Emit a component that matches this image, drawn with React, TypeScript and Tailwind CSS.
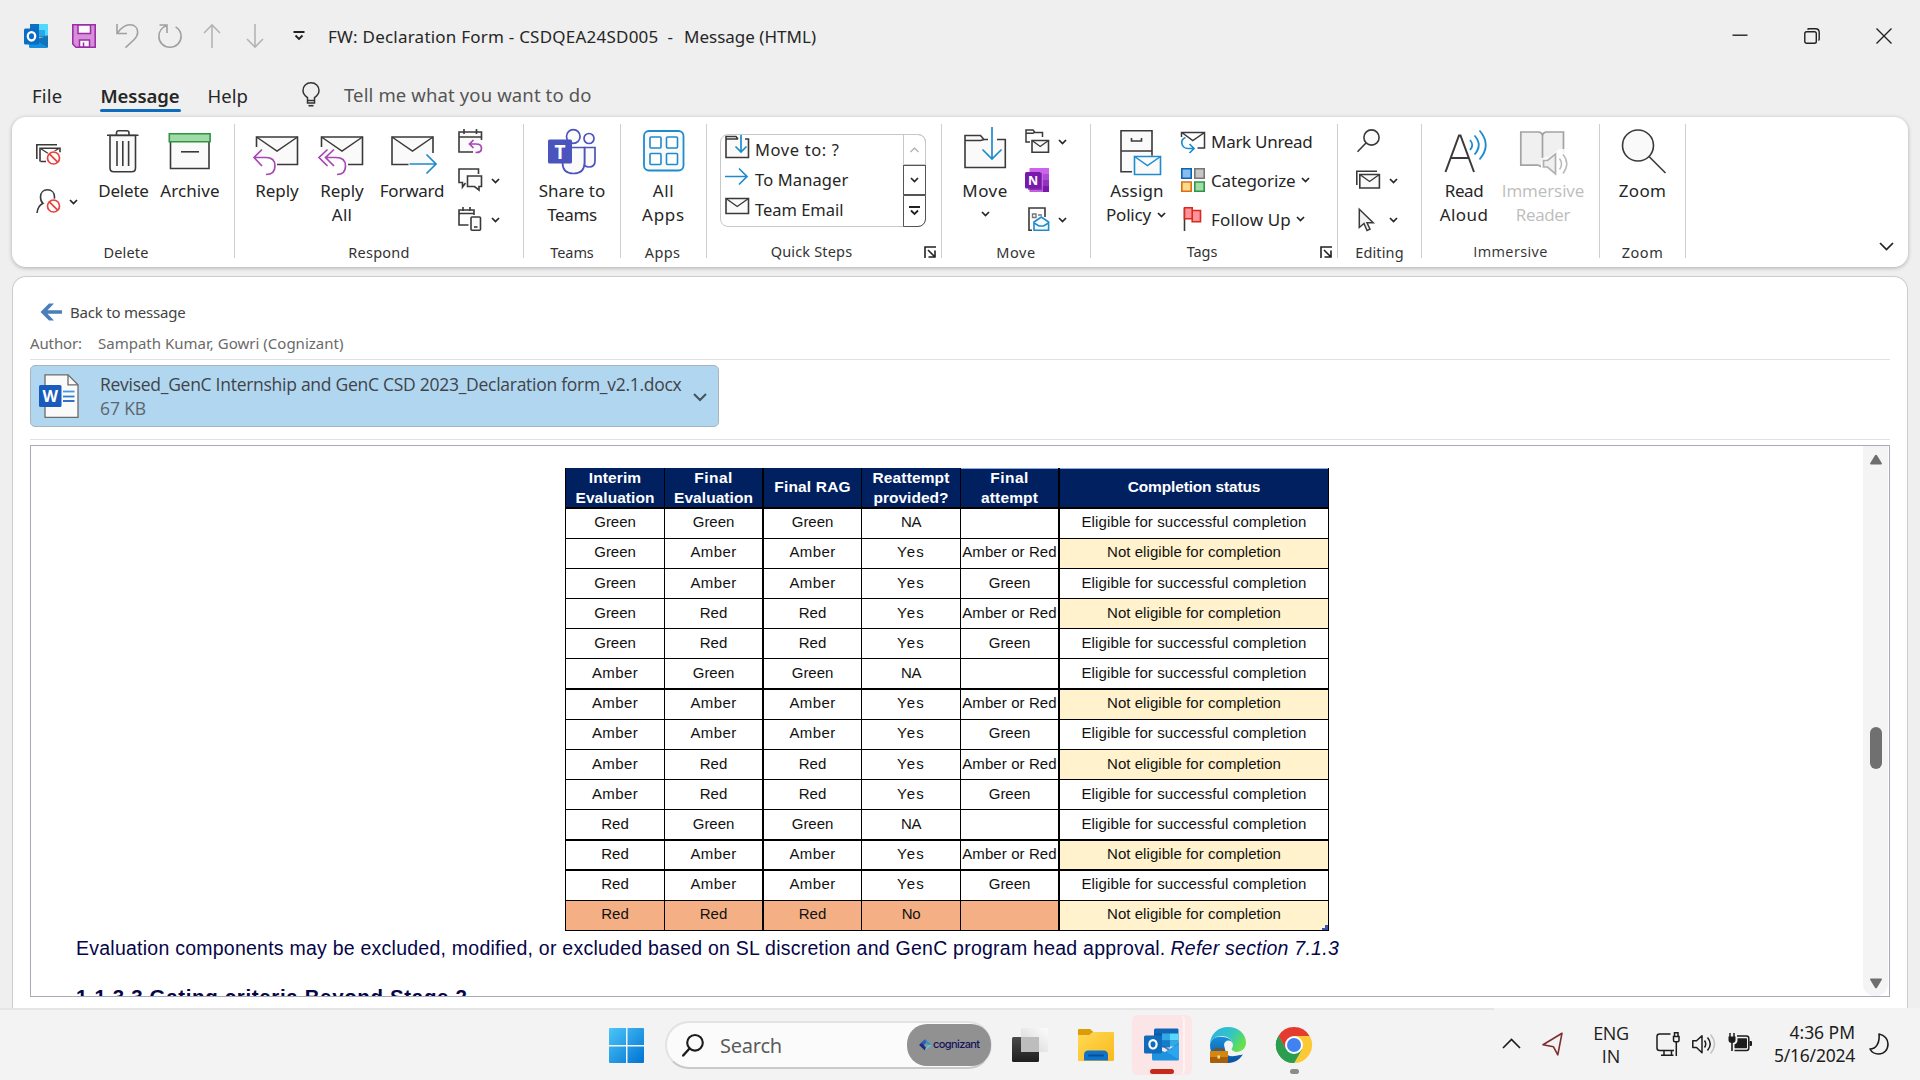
import React, { useLayoutEffect, useRef } from "react";

/** Text that is tracked so that its advance equals the given width. */
function Fit({ w, children, className = "" }: { w: number; children: string; className?: string }) {
  const ref = useRef<HTMLSpanElement>(null);
  useLayoutEffect(() => {
    const el = ref.current;
    if (!el) return;
    el.style.letterSpacing = "0px";
    const natural = el.getBoundingClientRect().width;
    el.style.letterSpacing = `${(w + 1.5 - natural) / children.length}px`;
  }, [w, children]);
  return (
    <span ref={ref} className={"inline-block whitespace-pre " + className}>
      {children}
    </span>
  );
}

type SvgProps = { w?: number; h?: number; children: React.ReactNode; className?: string };
function Svg({ w = 24, h = 24, children, className = "" }: SvgProps) {
  return (
    <svg width={w} height={h} viewBox={`0 0 ${w} ${h}`} fill="none" className={"shrink-0 overflow-visible " + className}>
      {children}
    </svg>
  );
}

const INK = "#3b3a39";
const BLUE = "#1e8bcd";
const PURPLE = "#a846b4";
const FILL = "#fafafa";

function Chevron({ className = "" }: { className?: string }) {
  return (
    <Svg w={9} h={6} className={className}>
      <path d="M1 1l3.5 3.6L8 1" stroke="#262626" strokeWidth="1.7" />
    </Svg>
  );
}

function Group({ width, label, labelW, labelClass = "", font = "", children, launcher = false }: {
  width: string; label: string; labelW: number; labelClass?: string; font?: string; children: React.ReactNode; launcher?: boolean;
}) {
  return (
    <div className={"h-[134px] shrink-0 border-r border-[#cfcfcf] " + width}>
      <div className="flex h-[118px]">{children}</div>
      <div className={"relative flex h-5 justify-center text-[14.5px] leading-5 text-[#333] " + labelClass}>
        <Fit w={labelW} className={font}>{label}</Fit>
        {launcher && (
          <Svg w={12} h={12} className="absolute top-[5px] right-[5px]">
            <path d="M1 12V1h11M4 4l6.5 6.5M11 4.5V11H4.5" stroke="#222" strokeWidth="1.6" />
          </Svg>
        )}
      </div>
    </div>
  );
}

function Big({ icon, lines, className = "", font = "", tail }: {
  icon: React.ReactNode; lines: [string, number][]; className?: string; font?: string; tail?: React.ReactNode;
}) {
  return (
    <div className={"flex shrink-0 flex-col items-center pt-[3px] text-[17px] leading-6 " + font + " " + className}>
      <div className="mb-1 h-12 w-12">{icon}</div>
      {lines.map(([t, w]) => <Fit key={t} w={w}>{t}</Fit>)}
      {tail}
    </div>
  );
}

const Envelope = ({ cut }: { cut: string }) => (
  <>
    <path d="M3.5 10h41v27.500h-41z" fill={FILL} />
    <path d={cut} stroke={INK} strokeWidth="1.6" />
    <path d="M3.5 10L24 24 44.500 10" stroke={INK} strokeWidth="1.5" />
  </>
);

const Small = ({ children, className = "" }: { children: React.ReactNode; className?: string }) => (
  <div className={"flex h-[39px] items-start " + className}>{children}</div>
);

function TitleBar() {
  return (
    <div className="flex h-[72px] items-center pr-7 pl-6">
      <Svg>
        <path d="M7 1.5q0-1.5 1.5-1.5h14Q24 0 24 1.5V13H6z" fill="#28a8ea" />
        <path d="M14 0h8.500Q24 0 24 1.500V12h-9z" fill="#50d9ff" />
        <path d="M6 0h9v5H6z" fill="#0f6fc0" />
        <path d="M6 6h9v12H6z" fill="#0364b8" />
        <path d="M15 6h6v7h-6z" fill="#28a8ea" />
        <path d="M5 22.500V17l19-5v10.500q0 1.500-1.500 1.500h-16Q5 24 5 22.500z" fill="#1490df" />
        <path d="M8 14l16 9.500V11z" fill="#123f70" opacity=".35" />
        <rect x="0" y="4.500" width="15" height="16" rx="1.500" fill="#0a6cc4" />
        <ellipse cx="7.500" cy="12.300" rx="3.700" ry="4.200" stroke="#fff" strokeWidth="2.300" />
      </Svg>
      <Svg className="ml-6">
        <path d="M.8.8h22.400v22.400H4L.8 20z" fill="#d88edb" stroke="#9a2fa6" strokeWidth="1.600" />
        <path d="M6 1h12.500v8.500H6zM7.500 23v-7h10v7z" fill="#fafafa" stroke="#9a2fa6" strokeWidth="1.500" />
        <path d="M11.500 18.500V23" stroke="#9a2fa6" strokeWidth="1.500" />
      </Svg>
      <Svg className="ml-5">
        <path d="M1 0v9.500h10M1.500 9C5 4 9 .8 14 .8c5 0 7.700 3.400 7.700 7.400 0 3-1.200 4.800-3.500 7.300L9.500 23.700" stroke="#a0a0a0" strokeWidth="1.600" />
      </Svg>
      <Svg className="ml-[18px]">
        <path d="M1.500 1H9v8M9 1.500C4 3 .9 7.500.9 12.500c0 6 4.800 10.700 11 10.700s11.200-4.700 11.200-10.700c0-4-2-7.500-5.500-9.600" stroke="#a0a0a0" strokeWidth="1.600" />
      </Svg>
      <Svg className="ml-[18px]">
        <path d="M12 24V1M4 9l8-8 8 8" stroke="#b4b4b4" strokeWidth="1.600" />
      </Svg>
      <Svg className="ml-[19px]">
        <path d="M12 0v23M4 15l8 8 8-8" stroke="#b4b4b4" strokeWidth="1.600" />
      </Svg>
      <Svg w={12} h={10} className="ml-[26px]">
        <path d="M.5 1h11M2.500 4.500L6 8l3.500-3.500" stroke="#222" strokeWidth="1.800" />
      </Svg>
      <div className="mt-0.5 ml-[23px] flex text-[17px] leading-6">
        <Fit w={329}>FW: Declaration Form - CSDQEA24SD005</Fit>
        <Fit w={6} className="ml-[9px]">-</Fit>
        <Fit w={130.500} className="ml-[9px]">Message (HTML)</Fit>
      </div>
      <div className="ml-auto flex items-center gap-14">
        <Svg w={16} h={16}><path d="M.5 7.200h15" stroke="#222" strokeWidth="1.400" /></Svg>
        <Svg w={16} h={16}>
          <rect x=".8" y="3.700" width="11.500" height="11.500" rx="1.800" stroke="#222" strokeWidth="1.400" />
          <path d="M3.500 1.500Q4 .8 5 .8h6.500q3.700 0 3.700 3.700V11q0 1-.8 1.500" stroke="#222" strokeWidth="1.400" />
        </Svg>
        <Svg w={16} h={16}><path d="M.5.5l15 15M15.500.5l-15 15" stroke="#222" strokeWidth="1.400" /></Svg>
      </div>
    </div>
  );
}

function Tabs() {
  return (
    <div className="flex h-[45px] items-start pt-2.5 pl-8 text-[18.500px] leading-7">
      <Fit w={29}>File</Fit>
      <div className="ml-[37px] flex w-[81px] flex-col items-center">
        <Fit w={77.500} className="font-semibold">Message</Fit>
        <div className="-mt-px h-[3px] w-full rounded-full bg-[#0f6cbd]" />
      </div>
      <Fit w={39} className="ml-[27px]">Help</Fit>
      <Svg w={18} h={25} className="ml-[54px]">
        <path d="M5.500 18.500v-2.800C2.500 13.500 1 11.300 1 8.500 1 4 4.300.8 9 .8S17 4 17 8.500c0 2.800-1.500 5-4.500 7.200v2.800zM5.500 18.500v2.500h7v-2.500" stroke="#333" strokeWidth="1.500" />
        <path d="M6.500 23.700h5" stroke="#333" strokeWidth="1.600" />
      </Svg>
      <Fit w={246} className="-mt-px ml-6 text-[#555]">Tell me what you want to do</Fit>
    </div>
  );
}

const Prohibit = ({ y }: { y: number }) => (
  <>
    <circle cx="17.500" cy={y} r="7.500" fill="#fff" />
    <circle cx="17.500" cy={y} r="6" stroke="#e8403a" strokeWidth="1.700" fill="#fff" />
    <path d={`M13.300 ${y - 4.200}l8.400 8.400`} stroke="#e8403a" strokeWidth="1.700" />
  </>
);

function DeleteGroup() {
  return (
    <Group width="w-[223px]" label="Delete" labelW={43.5} labelClass="pl-[6px]">
      <div className="ml-6 w-[57px] shrink-0 pt-[18px]">
        <div className="flex h-[47px] items-start">
          <Svg>
            <path d="M.8 17V2.800H21M4 19.500V6.200h20v4M4.500 19.500H10" stroke={INK} strokeWidth="1.600" />
            <path d="M4.500 6.500L13 12l10-5.500" stroke={INK} strokeWidth="1.300" />
            <Prohibit y={16} />
          </Svg>
        </div>
        <div className="flex items-start">
          <Svg>
            <path d="M1 24c.5-5 2.500-8 6-9.700C5 12.800 4.500 10.500 4.500 8c0-4.500 3-7.200 7-7.200s7 2.700 7 7.200c0 .8 0 1.500-.3 2.200" stroke={INK} strokeWidth="1.600" />
            <Prohibit y={17} />
          </Svg>
          <Chevron className="mt-2.5 ml-[9px]" />
        </div>
      </div>
      <Big className="w-[61px]" lines={[["Delete", 49]]} icon={
        <Svg w={48} h={48}>
          <path d="M10 8.500h25.500v32.500q0 3.800-3.800 3.800h-18q-3.700 0-3.700-3.800z" fill={FILL} stroke={INK} strokeWidth="1.600" />
          <path d="M7 8.200h31.500M16.500 8V6q0-2.200 2.200-2.200h8q2.300 0 2.300 2.200v2M17 14v25M22.800 14v25M28.600 14v25" stroke={INK} strokeWidth="1.600" />
        </Svg>} />
      <Big className="ml-1 w-16" lines={[["Archive", 58]]} icon={
        <Svg w={48} h={48}>
          <path d="M4.500 14h38.500v27.500h-38.500z" fill={FILL} stroke={INK} strokeWidth="1.600" />
          <path d="M3.300 6.800h40.800v8H3.300z" fill="#a0dba6" stroke="#2f9447" strokeWidth="1.600" />
          <path d="M15 24.800h18" stroke={INK} strokeWidth="1.600" />
        </Svg>} />
    </Group>
  );
}

function RespondGroup() {
  return (
    <Group width="w-[289px]" label="Respond" labelW={60}>
      <Big className="ml-[14px] w-14" lines={[["Reply", 42]]} icon={
        <Svg w={48} h={48}>
          <Envelope cut="M3.500 20V10h41v27.500H24" />
          <path d="M2 31h12q8 1 8 9 0 8-10 8L3 40z" fill="#fff" opacity=".9" />
          <path d="M9 22.500L1 30.500l8 8.500M1.500 30.500H13q9 0 9 8.500 0 8.500-9 8.500" stroke={PURPLE} strokeWidth="1.700" />
        </Svg>} />
      <Big className="ml-[9px] w-14" lines={[["Reply", 42], ["All", 19]]} icon={
        <Svg w={48} h={48}>
          <Envelope cut="M3.500 20V10h41v27.500H30" />
          <path d="M9 31h10q8 1 8 9 0 8-10 8L9 40z" fill="#fff" opacity=".9" />
          <path d="M9.500 22.500L1 30.500l8.500 8.500M16 22.500L7.500 30.500l8.500 8.500M8 30.500h10q9.500 0 9.500 8.500 0 8.500-8.500 8.500" stroke={PURPLE} strokeWidth="1.700" />
        </Svg>} />
      <Big className="ml-[7px] w-[70px]" lines={[["Forward", 63]]} icon={
        <Svg w={48} h={48}>
          <g transform="translate(.5 0)"><Envelope cut="M20 37.500H3.500V10h41v16" /></g>
          <path d="M22 36.500h26L38 46l-4-6H22z" fill="#fff" />
          <path d="M21.500 37h26M38.500 27.500l9.500 9.500-9.500 9.500" stroke={BLUE} strokeWidth="1.700" />
        </Svg>} />
      <div className="ml-[11px] pt-[5px]">
        <Small>
          <Svg>
            <path d="M1 3h22.500v20H1z" fill={FILL} />
            <path d="M15 23H1V3h22.500v8M1 8h22.500M6 0v5M18.500 0v5" stroke={INK} strokeWidth="1.600" />
            <path d="M15.500 11l-4 4 4 4M11.500 15H18q5.500 0 5.500 4.300t-5.500 4.200h-.5" stroke={PURPLE} strokeWidth="1.700" />
          </Svg>
        </Small>
        <Small>
          <Svg>
            <path d="M20.500 6V1H1v13.500h3.500V19l3-4" stroke={INK} strokeWidth="1.600" />
            <path d="M9.500 8h14v10.500H21V22l-4.500-3.500h-7z" fill={FILL} stroke={INK} strokeWidth="1.600" />
          </Svg>
          <Chevron className="mt-[10px] ml-[9px]" />
        </Small>
        <Small>
          <Svg>
            <path d="M10.500 18H1V3h15v5M1 6.500h15M5 0v4M12 0v4" stroke={INK} strokeWidth="1.600" />
            <rect x="13" y="10" width="9.500" height="13.300" rx="1" fill={FILL} stroke={INK} strokeWidth="1.600" />
            <path d="M16 20h3.500" stroke={INK} strokeWidth="1.600" />
          </Svg>
          <Chevron className="mt-[10px] ml-[9px]" />
        </Small>
      </div>
    </Group>
  );
}

const FolderIn = () => (
  <Svg>
    <path d="M1 1.500h10l2 2.500h10.500v18.500H1z" fill={FILL} />
    <path d="M13 4H1V1.500h10l2 2.500V4M1 2v20.500h22.500V4H20" stroke={INK} strokeWidth="1.600" />
    <path d="M16 0v17M10.500 11.500L16 17l5.500-5.500" stroke={BLUE} strokeWidth="1.700" />
  </Svg>
);

function QuickSteps() {
  return (
    <Group width="w-[235px]" label="Quick Steps" labelW={80} labelClass="pr-[25px] -top-px" launcher>
      <div className="mt-2.5 ml-[13px] flex h-[93px] w-[206px] rounded-lg border border-[#c8c8c8] text-[16.500px]">
        <div className="flex-1 pl-1 leading-[30px]">
          <div className="flex h-[30px]"><FolderIn /><Fit w={83} className="ml-1.5">Move to: ?</Fit></div>
          <div className="flex h-[30px]">
            <Svg><path d="M0 11.500h22M14 3.500l8 8-8 8" stroke={BLUE} strokeWidth="1.700" /></Svg>
            <Fit w={92} className="ml-1.5">To Manager</Fit>
          </div>
          <div className="flex h-[30px]">
            <Svg><path d="M1 3.500h22.500v15H1z" fill={FILL} stroke={INK} strokeWidth="1.600" /><path d="M1 3.500l11.200 8 11.300-8" stroke={INK} strokeWidth="1.400" /></Svg>
            <Fit w={87} className="ml-1.5">Team Email</Fit>
          </div>
        </div>
        <div className="-my-px -mr-px flex w-[23px] flex-col">
          <div className="flex h-[31px] items-center justify-center rounded-tr-lg border border-[#c8c8c8]">
            <Svg w={9} h={6}><path d="M.5 5l4-4 4 4" stroke="#b5b5b5" strokeWidth="1.500" /></Svg>
          </div>
          <div className="flex h-[30px] items-center justify-center border border-[#555]"><Chevron /></div>
          <div className="flex h-8 items-center justify-center rounded-br-lg border border-[#555]">
            <Svg w={11} h={10}><path d="M0 1h11M2 4.500L5.500 8 9 4.500" stroke="#222" strokeWidth="1.800" /></Svg>
          </div>
        </div>
      </div>
    </Group>
  );
}

function MoveGroup() {
  return (
    <Group width="w-[149px]" label="Move" labelW={38}>
      <Big className="ml-[13px] w-[60px]" lines={[["Move", 44]]} tail={<Chevron className="mt-[8px]" />} icon={
        <Svg w={48} h={48}>
          <path d="M4 8h16l3 4h21v28.500H4z" fill={FILL} />
          <path d="M4 8.500h15.500l3.500 4-3.500 1H4zM23 12.500h4M36 12.500h8.300v28H4V8" stroke={INK} strokeWidth="1.600" />
          <path d="M31 0v32M21.500 22.500l9.500 9.500 9.500-9.500" stroke={BLUE} strokeWidth="1.700" />
        </Svg>} />
      <div className="ml-2.5 pt-[5px]">
        <Small>
          <Svg>
            <path d="M5 13H1V1h7l2 2.500h7.500V8M1 4.200h7l2-1" stroke={INK} strokeWidth="1.500" />
            <path d="M7 11.500h16.500v11.700H7z" fill={FILL} stroke={INK} strokeWidth="1.600" />
            <path d="M7 11.500l8.200 6 8.300-6" stroke={INK} strokeWidth="1.400" />
          </Svg>
          <Chevron className="mt-[10px] ml-[9px]" />
        </Small>
        <Small>
          <Svg>
            <path d="M4.500 0H24v24H4.500z" fill="#ca64ea" />
            <path d="M18 6h6v6h-6z" fill="#ae4bd5" /><path d="M18 12h6v6h-6z" fill="#9332bf" /><path d="M4.500 18H18v6H4.500z" fill="#ae4bd5" opacity=".3" /><path d="M18 18h6v6h-6z" fill="#7719aa" />
            <rect x="3" y="5" width="14" height="17" fill="#5b1484" opacity=".6" />
            <rect x="0" y="4" width="16" height="16.500" rx="1.500" fill="#7719aa" />
            <text x="8" y="16.800" textAnchor="middle" fontSize="12.500" fontWeight="700" fill="#fff" fontFamily="Open Sans, sans-serif">N</text>
          </Svg>
        </Small>
        <Small>
          <Svg>
            <path d="M7 23.200H4V1h16v9" stroke={INK} strokeWidth="1.600" />
            <path d="M7.500 7h3.500v3.500H7.500zM13 8h4" stroke="#777" strokeWidth="1.400" />
            <path d="M9 15l7.300-5 7.300 5v8.200H9z" fill={FILL} stroke={BLUE} strokeWidth="1.600" />
            <path d="M9 16l5 3h4.500l5-3" stroke={BLUE} strokeWidth="1.500" />
          </Svg>
          <Chevron className="mt-[10px] ml-[9px]" />
        </Small>
      </div>
    </Group>
  );
}

function TagsGroup() {
  return (
    <Group width="w-[247px]" label="Tags" labelW={29} labelClass="pr-6 -top-px" launcher>
      <div className="ml-[13px] flex w-[66px] shrink-0 flex-col items-center pt-[3px] text-[17px] leading-6">
        <Svg w={48} h={48} className="mb-1">
          <path d="M8 4h31v41H8z" fill={FILL} />
          <path d="M19 44.800H8V3.800h31v25M8 24h31M18.500 11v3h10v-3" stroke={INK} strokeWidth="1.600" />
          <path d="M21.500 29.500h26v18h-26z" fill={FILL} stroke={BLUE} strokeWidth="1.600" />
          <path d="M21.500 29.500l13 9 13-9" stroke={BLUE} strokeWidth="1.500" />
        </Svg>
        <Fit w={52}>Assign</Fit>
        <div className="flex w-full items-center gap-1.5 pl-0.5"><Fit w={43.5}>Policy</Fit><Chevron /></div>
      </div>
      <div className="ml-[11px] pt-[5px] text-[17px] leading-6">
        <Small>
          <Svg>
            <path d="M.5 8V3.500h23V19h-7M.8 3.500l11 8 11.700-8" stroke={INK} strokeWidth="1.500" />
            <path d="M4.500 8.500C1 10 .5 12 .8 14c.4 3.300 3 5.500 6 5.500h5.500M8.500 15l4.500 4.500L8.500 24" stroke={BLUE} strokeWidth="1.700" />
          </Svg>
          <Fit w={100} className="mt-px ml-1.5">Mark Unread</Fit>
        </Small>
        <Small>
          <Svg>
            <path d="M.8.8h9.400v9.400H.8z" fill="#83beec" stroke="#0f62b5" strokeWidth="1.600" />
            <path d="M13.800.8h9.400v9.400h-9.400z" fill="#c8c6c4" stroke="#797775" strokeWidth="1.600" />
            <path d="M.8 14h9.400v9.200H.8z" fill="#f8db8f" stroke="#db6f12" strokeWidth="1.600" />
            <path d="M13.800 14h9.400v9.200h-9.400z" fill="#a1dda8" stroke="#2f9447" strokeWidth="1.600" />
          </Svg>
          <Fit w={83} className="mt-px ml-1.5">Categorize</Fit>
          <Chevron className="mt-[9px] ml-[5px]" />
        </Small>
        <Small>
          <Svg>
            <path d="M3.500 1v23" stroke={INK} strokeWidth="1.600" />
            <path d="M3.500.8h7.700v11H3.500zM11.200 3.500h8.300v11.200H11.200z" fill="#ff9398" stroke="#d62a20" strokeWidth="1.600" />
          </Svg>
          <Fit w={78.500} className="mt-px ml-1.5">Follow Up</Fit>
          <Chevron className="mt-[9px] ml-[5px]" />
        </Small>
      </div>
    </Group>
  );
}

function EditingGroup() {
  return (
    <Group width="w-[84px]" label="Editing" labelW={47}>
      <div className="ml-[18px] pt-[5px]">
        <Small><Svg><circle cx="15.500" cy="8.500" r="7.600" fill={FILL} stroke={INK} strokeWidth="1.600" /><path d="M10 14L1.500 22.800" stroke={INK} strokeWidth="1.600" /></Svg></Small>
        <Small>
          <Svg>
            <path d="M.8 17V3.300H21" stroke={INK} strokeWidth="1.600" />
            <path d="M3.800 6.500h19.600v13.500H3.800z" fill={FILL} stroke={INK} strokeWidth="1.600" />
            <path d="M3.800 6.500l9.800 7 9.800-7" stroke={INK} strokeWidth="1.400" />
          </Svg>
          <Chevron className="mt-[10px] ml-[9px]" />
        </Small>
        <Small>
          <Svg>
            <path d="M3.300 2.200v18.300l4.700-4 3 7 3-1.400-3-6.300h6.200z" fill="#f2f2f2" stroke={INK} strokeWidth="1.500" />
          </Svg>
          <Chevron className="mt-[10px] ml-[9px]" />
        </Small>
      </div>
    </Group>
  );
}

function ImmersiveGroup() {
  return (
    <Group width="w-[178px]" label="Immersive" labelW={73} font="font-['Open_Sans']">
      <Big className="ml-3 w-[60px]" lines={[["Read", 37], ["Aloud", 47]]} icon={
        <Svg w={48} h={48}>
          <path d="M5.500 45L19 8.500h1.500L34 45M10.500 31h18.500" stroke={INK} strokeWidth="2" />
          <path d="M30 13q4.500 5 0 10M34.500 8.500q8.500 9.500 0 19M39.500 3.500q12.500 14.500 0 29" stroke={BLUE} strokeWidth="1.800" />
        </Svg>} />
      <Big className="ml-[7px] w-[84px] text-[#bdbdbd]" font="font-['Open_Sans']" lines={[["Immersive", 81], ["Reader", 53]]} icon={
        <Svg w={48} h={48}>
          <path d="M1.800 5H20q3 0 3.500 3 .5-3 3.500-3h17.500v33H27q-3 0-3.500 3-.5-3-3.500-3H1.800z" fill="#f0f0f0" />
          <path d="M22 40q-1-1.800-4-1.800H1.800V5H20q3 .5 3.500 3.500Q24 5.500 27 5h17.500v21M23.500 8v26" stroke="#a3a3a3" strokeWidth="1.700" />
          <path d="M22 31l8-1 10-8h8v27h-9l-9-8-8-1z" fill="#fff" opacity=".85" />
          <path d="M24.500 33.500h4L36.500 27v20L28.500 40h-4z" fill="#f0f0f0" stroke="#b0b0b0" strokeWidth="1.700" />
          <path d="M40.500 31.500q4 5.500 0 11M44 27.500q7.500 9 0 19" stroke="#b9b9b9" strokeWidth="1.500" />
        </Svg>} />
    </Group>
  );
}

function Ribbon() {
  return (
    <div className="mx-3 flex h-[150px] rounded-[14px] bg-white pt-[7px] shadow-[0_1px_4px_rgba(0,0,0,0.28)]">
      <DeleteGroup />
      <RespondGroup />
      <Group width="w-[97px]" label="Teams" labelW={42}>
        <Big className="w-full" lines={[["Share to", 65], ["Teams", 48]]} icon={
          <Svg w={48} h={48}>
            <circle cx="25.300" cy="9.500" r="6.800" fill={FILL} stroke="#4b53bc" strokeWidth="1.700" />
            <circle cx="41" cy="11.500" r="5" fill={FILL} stroke="#4b53bc" strokeWidth="1.700" />
            <path d="M36.500 20.500H47v13.500q0 6-6 6-2.500 0-4.500-1.500z" fill={FILL} stroke="#4b53bc" strokeWidth="1.700" />
            <path d="M14.500 20.500h22v15q0 11-11 11t-11-11z" fill={FILL} stroke="#4b53bc" strokeWidth="1.700" />
            <rect x="0" y="12.500" width="24" height="24" rx="1.500" fill="#4b53bc" />
            <text x="12" y="31.500" textAnchor="middle" fontSize="19" fontWeight="700" fill="#fff" fontFamily="Noto Sans, sans-serif">T</text>
          </Svg>} />
      </Group>
      <Group width="w-[86px]" label="Apps" labelW={34} labelClass="pr-0.5">
        <Big className="w-full" lines={[["All", 20], ["Apps", 41.5]]} icon={
          <Svg w={48} h={48}>
            <rect x="4" y="4" width="39.500" height="39.500" rx="5" fill={FILL} stroke={BLUE} strokeWidth="1.800" />
            {[[10, 10], [26.500, 10], [10, 26.500], [26.500, 26.500]].map(([x, y]) => (
              <rect key={`${x}-${y}`} x={x} y={y} width="11" height="11" rx="1" fill="#fff" stroke={BLUE} strokeWidth="1.600" />
            ))}
          </Svg>} />
      </Group>
      <QuickSteps />
      <MoveGroup />
      <TagsGroup />
      <EditingGroup />
      <ImmersiveGroup />
      <Group width="w-[86px]" label="Zoom" labelW={40}>
        <Big className="w-full" lines={[["Zoom", 46]]} icon={
          <Svg w={48} h={48}>
            <circle cx="19" cy="18.500" r="15.500" fill={FILL} stroke={INK} strokeWidth="1.600" />
            <path d="M30 29.500L46.500 46" stroke={INK} strokeWidth="1.600" />
          </Svg>} />
      </Group>
      <Svg w={15} h={9} className="mr-[14px] mb-4 ml-auto self-end">
        <path d="M1 1l6.500 6.500L14 1" stroke="#222" strokeWidth="1.700" />
      </Svg>
    </div>
  );
}

const G = "Green", A = "Amber", R = "Red", Y = "Yes", AR = "Amber or Red";
const ROWS: [string, string, string, string, string, boolean][] = [
  [G, G, G, "NA", "", true], [G, A, A, Y, AR, false], [G, A, A, Y, G, true], [G, R, R, Y, AR, false], [G, R, R, Y, G, true],
  [A, G, G, "NA", "", true], [A, A, A, Y, AR, false], [A, A, A, Y, G, true], [A, R, R, Y, AR, false], [A, R, R, Y, G, true],
  [R, G, G, "NA", "", true], [R, A, A, Y, AR, false], [R, A, A, Y, G, true], [R, R, R, "No", "", false],
];
const WORD_W: Record<string, number> = { Green: 40, Amber: 44.5, Red: 26, Yes: 26.5, NA: 18.5, No: 17, "Amber or Red": 93 };
const COLS = "grid grid-cols-[99px_99px_98px_99px_99px_269px]";
const CELL = ["border-r", "border-r-2", "border-r", "border-r", "border-r-2", "border-r"];
const HEAD: [string, number][][] = [
  [["Interim", 51], ["Evaluation", 77.500]],
  [["Final", 37], ["Evaluation", 77.500]],
  [["Final RAG", 75]],
  [["Reattempt", 75.500], ["provided?", 73.500]],
  [["Final", 37], ["attempt", 55.500]],
  [["Completion status", 131]],
];
const LOW_ROWS = [2, 3, 4, 5, 8, 9, 10];

function RagTable() {
  return (
    <div className="relative mt-[22px] ml-[534px] w-[764px] border-l border-black text-[15px] leading-5 text-[#111]">
      <div className={COLS + " h-[41px] border-b-2 border-black bg-[#002060] text-[15.500px] font-bold text-white"}>
        {HEAD.map((lines, i) => (
          <div key={i} className={"flex flex-col items-center border-black " + CELL[i] + (lines.length === 1 ? " pt-[9px]" : "") + (i >= 4 ? " shadow-[inset_0_1px_0_#8ea9db]" : "")}>
            {lines.map(([t, w]) => <Fit key={t} w={w}>{t}</Fit>)}
          </div>
        ))}
      </div>
      {ROWS.map((r, i) => {
        const pad = LOW_ROWS.includes(i) ? " pt-1" : " pt-[3px]";
        return (
          <div key={i} className={COLS + " border-black " + (i === 5 || i === 10 ? "h-[31px] border-b-2" : i === 11 ? "h-[30px] border-b-2" : "h-[30px] border-b")}>
            {r.slice(0, 5).map((c, j) => (
              <div key={j} className={"flex justify-center border-black " + CELL[j] + pad + (i === 13 ? " bg-[#f4b084]" : " bg-white")}>
                {c ? <Fit w={WORD_W[c as string]}>{c as string}</Fit> : null}
              </div>
            ))}
            <div className={"flex justify-center border-r border-black " + (r[5] ? "bg-white" : "bg-[#fff2cc]") + pad}>
              {r[5] ? <Fit w={223.500}>Eligible for successful completion</Fit> : <Fit w={172.500}>Not eligible for completion</Fit>}
            </div>
          </div>
        );
      })}
      <Svg w={6} h={5} className="absolute right-px bottom-px"><path d="M6 0v5H0V3h3V0z" fill="#3f51a8" /></Svg>
    </div>
  );
}

function Reader() {
  return (
    <div className="mx-3 mt-[9px] flex h-[732px] flex-col rounded-t-[14px] border border-b-0 border-[#cdcdcd] bg-white px-[17px] pt-[25px] text-[15px] leading-5">
      <div className="flex items-center pl-[10px]">
        <Svg w={22} h={18}><path d="M9 .5h5L7.500 7.200H22v3.600H7.500l6.500 6.700H9L.5 9z" fill="#4a7fb8" /></Svg>
        <Fit w={114} className="ml-2 text-[#444]">Back to message</Fit>
      </div>
      <div className="mt-[11px] flex text-[#6a6a6a]">
        <Fit w={50.500}>Author:</Fit>
        <Fit w={244} className="ml-4">Sampath Kumar, Gowri (Cognizant)</Fit>
      </div>
      <div className="mt-1.5 h-px w-full bg-[#e1e1e1]" />
      <div className="mt-[5px] flex h-[62px] w-[689px] items-center rounded-[5px] border border-[#a9b4bc] bg-[#b1d6f0]">
        <Svg w={40} h={44} className="ml-2">
          <path d="M6 .8h23l10 10v32.500H6z" fill="#fafafa" stroke="#6b6b6b" strokeWidth="1.300" />
          <path d="M29 .8v10h10" stroke="#6b6b6b" strokeWidth="1.300" />
          <path d="M24 17.500h11.500" stroke="#3c9be6" strokeWidth="1.800" /><path d="M24 22.500h11.500" stroke="#2b7cd3" strokeWidth="1.800" /><path d="M24 27h11.500" stroke="#1f5fc0" strokeWidth="1.800" />
          <rect x="0" y="11" width="22.500" height="22" rx="1.500" fill="#185abd" />
          <text x="11.200" y="28" textAnchor="middle" fontSize="16" fontWeight="700" fill="#fff" fontFamily="Open Sans, sans-serif">W</text>
        </Svg>
        <div className="ml-[21px] flex flex-col items-start text-[17.500px] leading-6 font-['Open_Sans']">
          <Fit w={580} className="text-[#3f4448]">Revised_GenC Internship and GenC CSD 2023_Declaration form_v2.1.docx</Fit>
          <Fit w={44.500} className="text-[#5b666e]">67 KB</Fit>
        </div>
        <Svg w={14} h={9} className="mt-0.5 ml-[11px]"><path d="M1 1l6 6 6-6" stroke="#44525e" strokeWidth="2" /></Svg>
      </div>
      <div className="mt-3 h-px w-full shrink-0 bg-[#e1e1e1]" />
      <div className="mt-[5px] flex h-[552px] w-full shrink-0 overflow-hidden border border-[#a5abb8] font-['Liberation_Sans']">
        <div className="flex-1">
          <RagTable />
          <div className="mt-[5px] ml-[45px] flex text-[19.500px] leading-6 text-[#050548]">
            <Fit w={1088}>Evaluation components may be excluded, modified, or excluded based on SL discretion and GenC program head approval.</Fit>
            <Fit w={167} className="ml-[5px] italic">Refer section 7.1.3</Fit>
          </div>
          <div className="mt-[25px] ml-[45px] text-[20.500px] leading-6 font-bold text-[#050548]">
            <Fit w={390}>1.1.3.3 Gating criteria Beyond Stage 2</Fit>
          </div>
        </div>
        <div className="mr-px flex w-[25px] flex-col items-center rounded-b-xl bg-[#f4f4f4] pt-2 pb-[7px]">
          <Svg w={14} h={11}><path d="M1 9.500L6 1.200q1-1 2 0l5 8.300q0 1-1 1H2q-1 0-1-1z" fill="#6e6e6e" /></Svg>
          <div className="mt-[262px] h-[42px] w-3 rounded-full bg-[#707070]" />
          <Svg w={14} h={11} className="mt-auto"><path d="M1 1.500L6 9.800q1 1 2 0l5-8.300q0-1-1-1H2q-1 0-1 1z" fill="#6e6e6e" /></Svg>
        </div>
      </div>
    </div>
  );
}

function Taskbar() {
  return (
    <div className="flex h-[72px] flex-col bg-[#f3f3f3]">
      <div className="h-0.5 w-[1494px] bg-[#e5e5e5]" />
      <div className="flex h-[70px] pl-[609px]">
        <Svg w={36} h={36} className="mt-[18px]">
          <defs><linearGradient id="win" x1="0" y1="0" x2="1" y2="1"><stop stopColor="#4cc6f8" /><stop offset="1" stopColor="#0072d2" /></linearGradient></defs>
          <path d="M0 1q0-1 1-1h16v17H0zM18.500 0H34q1 0 1 1v16H18.500zM0 18.500h17V35H1q-1 0-1-1zM18.500 18.500H35V34q0 1-1 1H18.500z" fill="url(#win)" />
        </Svg>
        <div className="mt-[11px] ml-5 flex h-[48px] w-[327px] items-center rounded-full border-2 border-[#e3e3e3] border-b-[#c9c9c9] bg-[#fbfbfb] pl-[15px]">
          <Svg w={22} h={23}><ellipse cx="13" cy="8.800" rx="7.800" ry="7.800" stroke="#1c1c1c" strokeWidth="2.100" /><path d="M7.500 14.500L1.200 21.500" stroke="#1c1c1c" strokeWidth="2.400" strokeLinecap="round" /></Svg>
          <Fit w={60.500} className="mt-px ml-4 text-[20px] leading-7 text-[#5c5c5c]">Search</Fit>
          <div className="-mr-px ml-auto flex h-[42px] w-[84px] items-center rounded-[20px] bg-[#919191] pl-3">
            <Svg w={13} h={12}>
              <path d="M6 .5L0 6l6 5.500 1-3L4.500 6 7 3.500z" fill="#1d2d86" /><path d="M2 4l4-3.500L8 2 5 6z" fill="#2b5fb5" /><path d="M6 .5L13 6 10 7 7 3.500z" fill="#2f8fd0" /><path d="M6 11.500L13 6l-3-.5L7 8.500z" fill="#63c3cf" />
            </Svg>
            <Fit w={45} className="-mt-0.5 ml-[1px] text-[11px] leading-4 font-medium text-[#14145a] font-['Inter']">cognizant</Fit>
          </div>
        </div>
        <Svg w={36} h={36} className="mt-[18px] ml-5">
          <defs>
            <linearGradient id="tv" x1="0" y1="0" x2="0" y2="1"><stop stopColor="#4a4a4a" /><stop offset="1" stopColor="#1e1e1e" /></linearGradient>
            <linearGradient id="tv2" x1="1" y1="0" x2="0" y2="1"><stop stopColor="#fcfcfc" /><stop offset="1" stopColor="#d4d4d4" /></linearGradient>
          </defs>
          <rect x="0" y="9" width="27" height="25" rx="1.500" fill="url(#tv)" />
          <rect x="9" y="0" width="27" height="24" rx="1.500" fill="url(#tv2)" />
          <rect x="9" y="9" width="18" height="15" fill="#bdbdbd" />
        </Svg>
        <Svg w={36} h={36} className="mt-[18px] ml-[30px]">
          <defs><linearGradient id="fx" x1="0" y1="0" x2="1" y2="1"><stop stopColor="#ffda57" /><stop offset="1" stopColor="#fab91b" /></linearGradient></defs>
          <path d="M0 2q0-1 1-1h11l4 3.500V8H0z" fill="#dc9c05" />
          <path d="M0 7h11l4-3h20q1 0 1 1v27q0 1-1 1H1q-1 0-1-1z" fill="url(#fx)" />
          <path d="M6 32.500V27q0-4.500 4.500-4.500h15q4.500 0 4.500 4.500v5.500z" fill="#1173c8" />
          <path d="M11 27.500h14" stroke="#0a4f94" strokeWidth="1.800" strokeLinecap="round" />
        </Svg>
        <div className="mt-[5px] ml-[18px] flex h-[60px] w-[60px] rounded-md bg-[#fde6e7]">
          <div className="w-[53px] shrink-0 rounded-md border-r-2 border-[#fff3f3] bg-[#fce5e6] pl-3">
            <Svg w={36} h={33} className="mt-[13px]">
              <path d="M10 2q0-1.500 1.500-1.500h22Q34.500.5 34.500 2v16H10z" fill="#1066b5" />
              <path d="M10 5.500h8v7h-8z" fill="#0c59a4" /><path d="M18 5.500h8v7h-8z" fill="#32a9e7" /><path d="M26 5.500h8.500v7H26z" fill="#58d9fc" /><path d="M18 12.500h8v7h-8z" fill="#167ec8" /><path d="M26 12.500h8.500v6H26z" fill="#32a9e7" />
              <path d="M8 31V19l13 5 14-8.500v15.500q0 1.500-1.500 1.500h-24Q8 32.500 8 31z" fill="#1f93e0" />
              <path d="M18 18l17 13V15l-9 6-6-3z" fill="#1066b5" opacity=".75" />
              <path d="M35 15.500v16L22 23.500z" fill="#2ba5ee" />
              <rect x="0" y="7.500" width="18" height="18" rx="1.500" fill="#0f6cbd" />
              <ellipse cx="9" cy="16.300" rx="3.600" ry="4.200" stroke="#fff" strokeWidth="2.200" />
            </Svg>
            <div className="mt-2 ml-1.5 h-[5px] w-6 rounded-full bg-[#c42b1c]" />
          </div>
        </div>
        <Svg w={36} h={36} className="mt-[17px] ml-[18px]">
          <defs>
            <linearGradient id="ed" x1="0" y1="0" x2="1" y2=".5"><stop stopColor="#2bb0e8" /><stop offset=".6" stopColor="#34c6c0" /><stop offset="1" stopColor="#66e04c" /></linearGradient>
            <linearGradient id="ed2" x1="0" y1="0" x2="0" y2="1"><stop stopColor="#1790dc" /><stop offset="1" stopColor="#0b4f9c" /></linearGradient>
          </defs>
          <path d="M0 18C1 11 7 9 13 10c6 .5 9 3 10 7-4-1-8 3-7 9 1 4 8 4 17 1-3 5.500-8 9-15 9C8 36 0 29 0 18z" fill="url(#ed2)" />
          <path d="M0 18C0 7 8 0 18 0c11 0 18 7.500 18 15.500 0 6-5 9.500-9.500 9.500-4 0-6-1.500-6-2.700 0-1 2-2 2-4.800C22.500 12 17 9 11.500 9 6 9 1.500 12 0 18z" fill="url(#ed)" />
          <path d="M14 18a4.500 4.500 0 0 1 9 0q0 2.500-1.500 4 2 4.500 12.500 3l-1.500 2.500C23 29.500 16 27.500 15 22z" fill="#f3f3f3" />
          <rect x="5" y="22" width="8" height="5" rx="1" stroke="#8a4b08" strokeWidth="1.600" />
          <rect x="0" y="24" width="18" height="12" rx="1" fill="#a85f0b" />
          <path d="M0 24h18v6H0z" fill="#d6860f" /><path d="M7.500 28.500h2.500v3H7.500z" fill="#ffe08a" />
        </Svg>
        <div className="ml-[30px] flex w-9 flex-col items-center pt-[17px]">
          <Svg w={36} h={36}>
            <path d="M18 18L2.400 9A18 18 0 0 1 33.600 9z" fill="#e33b2e" />
            <path d="M18 9h15.600A18 18 0 0 1 18 36L25.800 22.500z" fill="#fcc934" />
            <path d="M10.200 22.500L2.400 9A18 18 0 0 0 18 36l7.800-13.500z" fill="#2a9d4e" />
            <path d="M2.400 9l7.800 13.500L18 9z" fill="#e33b2e" />
            <path d="M2.400 9A18 18 0 0 0 18 36l7.800-13.500H10.200z" fill="#2a9d4e" />
            <circle cx="18" cy="18" r="9" fill="#fff" /><circle cx="18" cy="18" r="7" fill="#3f82f0" />
          </Svg>
          <div className="mt-[6px] h-[5px] w-[9px] rounded-full bg-[#8b8b8b]" />
        </div>
        <Svg w={19} h={11} className="mt-[28px] ml-[190px]"><path d="M1 10l8.500-8.500L18 10" stroke="#1c1c1c" strokeWidth="1.600" /></Svg>
        <Svg w={22} h={24} className="mt-[22px] ml-[21px]"><path d="M20 1.200L1 12.800l10.500 2 4.300 8z" stroke="#7c2f2c" strokeWidth="1.600" strokeLinejoin="round" /></Svg>
        <div className="mt-3 ml-[27px] flex w-[40px] flex-col items-center text-[18px] leading-[23px] text-[#1c1c1c] font-['Open_Sans']">
          <Fit w={34}>ENG</Fit><Fit w={17}>IN</Fit>
        </div>
        <Svg className="mt-[22px] ml-[25px]">
          <path d="M14.500 2H3.500Q1 2 1 4.500v11.500Q1 18.500 3.500 18.500H18M8 19v4M15.500 19v4M5 23.200h12.500" stroke="#1c1c1c" strokeWidth="1.500" />
          <path d="M17.500 4.500h5.500v3.700q0 1.500-1.500 1.500H19q-1.500 0-1.500-1.500zM18.500 4.500V.8H22v3.700M20.300 10v14" stroke="#1c1c1c" strokeWidth="1.500" />
        </Svg>
        <Svg className="mt-[22px] ml-3">
          <path d="M.8 8.800H4.500L10 3.700v17L4.500 15.500H.8z" stroke="#1c1c1c" strokeWidth="1.500" strokeLinejoin="round" />
          <path d="M12.500 8.500q2.500 3.500 0 7M15.500 5.500q5.500 6.500 0 13" stroke="#1c1c1c" strokeWidth="1.500" /><path d="M18.500 2.500q8 9.500 0 19" stroke="#c3c3c3" strokeWidth="1.500" />
        </Svg>
        <Svg className="mt-[22px] ml-3">
          <path d="M2 1v4M6 1v4" stroke="#1c1c1c" strokeWidth="1.500" /><path d="M.5 4.500h7V8Q7.500 11 4 11 .5 11 .5 8z" fill="#1c1c1c" /><path d="M4 10v9" stroke="#1c1c1c" strokeWidth="1.600" />
          <path d="M9 4h9.500q2.300 0 2.300 2.500v9.500q0 2.500-2.300 2.500H6.500" stroke="#1c1c1c" strokeWidth="1.500" />
          <path d="M9.500 6.200h8.800q.7 0 .7.800v8.500q0 .8-.7.800H6.500v-4q3-1 3-4z" fill="#1c1c1c" /><path d="M21.500 9H23q1 0 1 1v3q0 1-1 1h-1.500z" fill="#1c1c1c" />
        </Svg>
        <div className="mt-[11px] ml-[19px] flex w-[84px] flex-col items-end text-[17.500px] leading-[23px] text-[#1c1c1c]">
          <Fit w={64}>4:36 PM</Fit><Fit w={79.500}>5/16/2024</Fit>
        </div>
        <Svg w={20} h={22} className="mt-[23px] ml-[14px]">
          <path d="M10 1c6 1 9 5.500 9 10 0 6-4 10-9.500 10C5.500 21 2.500 19 1 16c6 0 10-6 9-15z" stroke="#1c1c1c" strokeWidth="1.600" strokeLinejoin="round" />
        </Svg>
      </div>
    </div>
  );
}

export default function App() {
  return (
    <div className="h-[1080px] w-[1920px] overflow-hidden bg-[#efefef] font-['Noto_Sans',sans-serif] text-[#262626]">
      <TitleBar />
      <Tabs />
      <Ribbon />
      <Reader />
      <Taskbar />
    </div>
  );
}
